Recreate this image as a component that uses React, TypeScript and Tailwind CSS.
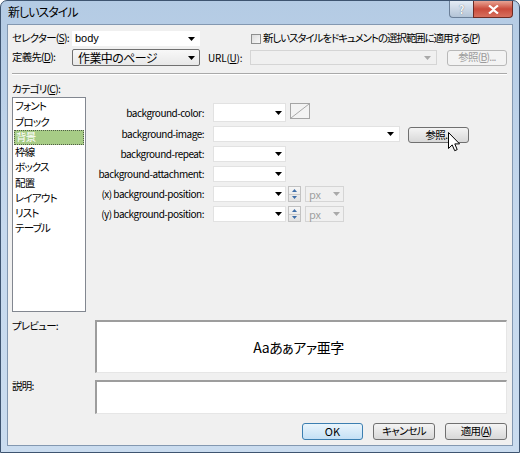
import React from "react";

const ui =
  "font-['Noto_Sans_CJK_JP','Liberation_Sans',sans-serif] [font-feature-settings:'palt']";
const jp = "text-[10.5px] tracking-[-0.8px]";

function Arrow({ disabled = false }: { disabled?: boolean }) {
  return (
    <svg width="7" height="4" viewBox="0 0 7 4" className="shrink-0">
      <path d="M0 0H7L3.5 4Z" fill={disabled ? "#a9a9a9" : "#000"} />
    </svg>
  );
}

function U({ children }: { children: React.ReactNode }) {
  return <span className="underline underline-offset-[1px]">{children}</span>;
}

function Combo({
  className = "",
  text,
  disabled = false,
}: {
  className?: string;
  text?: string;
  disabled?: boolean;
}) {
  return (
    <div
      className={`flex shrink-0 items-center justify-between border pl-[3px] pr-[3px] ${
        disabled
          ? "border-[#d5d5d5] bg-[#f0f0f0] text-[#a0a0a0]"
          : "border-[#e2e2e2] bg-white"
      } ${className}`}
    >
      <span className="leading-none">{text}</span>
      <Arrow disabled={disabled} />
    </div>
  );
}

function Btn({
  children,
  className = "",
  primary = false,
  disabled = false,
}: {
  children: React.ReactNode;
  className?: string;
  primary?: boolean;
  disabled?: boolean;
}) {
  let look = "border-[#707070] bg-gradient-to-b from-[#f4f4f4] to-[#d8d8d8]";
  if (primary) look = "border-[#3c7fb1] bg-gradient-to-b from-[#eaf5fc] to-[#c4e0f5]";
  if (disabled) look = "border-[#b8b8b8] bg-[#f3f3f3] text-[#9c9c9c]";
  return (
    <div
      className={`relative flex shrink-0 items-center justify-center rounded-[3px] border leading-none ${look} ${className}`}
    >
      {children}
    </div>
  );
}

function Spinner() {
  return (
    <div className="ml-[2px] flex h-[16px] w-[13px] shrink-0 flex-col border border-[#c2c2c2] bg-gradient-to-b from-[#f6f6f6] to-[#e2e2e2]">
      <div className="flex flex-1 items-center justify-center border-b border-[#c9c9c9]">
        <svg width="5" height="3" viewBox="0 0 5 3">
          <path d="M0 3H5L2.5 0Z" fill="#3f6ea8" />
        </svg>
      </div>
      <div className="flex flex-1 items-center justify-center">
        <svg width="5" height="3" viewBox="0 0 5 3">
          <path d="M0 0H5L2.5 3Z" fill="#3f6ea8" />
        </svg>
      </div>
    </div>
  );
}

function PropRow({
  label,
  children,
  className = "h-[16px] mt-[4px]",
}: {
  label: string;
  children: React.ReactNode;
  className?: string;
}) {
  return (
    <div className={`flex items-center ${className}`}>
      <div className="w-[119px] shrink-0 pr-[1px] text-right text-[10px] leading-none tracking-[-0.5px]">
        {label}
      </div>
      <div className="ml-[8px] flex h-full items-center">{children}</div>
    </div>
  );
}

const categories = [
  "フォント",
  "ブロック",
  "背景",
  "枠線",
  "ボックス",
  "配置",
  "レイアウト",
  "リスト",
  "テーブル",
];

export default function App() {
  return (
    <div
      className={`flex h-[453px] w-[520px] flex-col whitespace-nowrap rounded-t-[7px] border border-[#3e5470] bg-gradient-to-b from-[#b4cbe4] via-[#c6d9ee] to-[#cadcef] text-black ${ui}`}
    >
      {/* title bar */}
      <div className="flex h-[23px] shrink-0 items-start">
        <div className="pl-[7px] pt-[3px] text-[12px] leading-[16px] tracking-[-1px]">
          新しいスタイル
        </div>
        <div className="ml-auto mr-[6px] flex">
          <div className="flex h-[17px] w-[24px] items-center justify-center rounded-bl-[4px] border border-r-0 border-t-0 border-[#6b7f98] bg-gradient-to-b from-[#e4ecf5] to-[#b3c3d6] text-[11px] font-bold leading-none text-[#f8f8f8] [text-shadow:0_0_1px_#4a5a6e]">
            ?
          </div>
          <div className="flex h-[17px] w-[40px] items-center justify-center rounded-br-[4px] border border-t-0 border-[#6d2b24] bg-gradient-to-b from-[#e7a394] via-[#c94a3b] to-[#d7705e]">
            <svg width="11" height="9" viewBox="0 0 11 9">
              <path
                d="M1 0.5L5.5 4L10 0.5M1 8.5L5.5 5L10 8.5"
                stroke="#ffffff"
                strokeWidth="2.2"
                fill="none"
              />
            </svg>
          </div>
        </div>
      </div>

      {/* client area */}
      <div className={`mx-[6px] mb-[6px] flex flex-1 flex-col border border-[#8398b1] bg-[#f0f0f0] pl-[4px] pr-[5px] pt-[6px] ${jp}`}>
        {/* selector row */}
        <div className="flex h-[15px] items-center">
          <div className="w-[60px] shrink-0 leading-none">
            セレクター(<U>S</U>):
          </div>
          <div className="flex h-full w-[128px] shrink-0 items-center justify-between bg-white pl-[3px] pr-[5px] font-['Liberation_Sans',sans-serif] text-[11px] leading-none tracking-normal">
            <span>body</span>
            <Arrow />
          </div>
          <div className="ml-[51px] h-[10px] w-[10px] shrink-0 border border-[#8e8f8f] bg-gradient-to-br from-[#dcdcdc] to-[#f8f8f8]" />
          <div className="ml-[2px] leading-none tracking-[-1.1px]">
            新しいスタイルをドキュメントの選択範囲に適用する(<U>P</U>)
          </div>
        </div>

        {/* define row */}
        <div className="mt-[3px] flex h-[17px] items-center">
          <div className="w-[60px] shrink-0 leading-none">
            定義先(<U>D</U>):
          </div>
          <div className="flex h-full w-[128px] shrink-0 items-center justify-between rounded-[2px] border border-[#707070] bg-gradient-to-b from-[#f8f8f8] to-[#e8e8e8] pl-[5px] pr-[4px] text-[12px] leading-none tracking-[-0.6px]">
            <span>作業中のページ</span>
            <Arrow />
          </div>
          <div className="ml-[8px] w-[42px] shrink-0 text-[10px] leading-none tracking-[-0.2px]">
            URL(<U>U</U>):
          </div>
          <Combo disabled className="h-[15px] w-[187px] pr-[5px]" />
          <Btn disabled className="ml-[10px] h-[16px] w-[60px]">
            参照(<U>B</U>)...
          </Btn>
        </div>

        {/* separator */}
        <div className="mt-[7px] h-[2px] shrink-0 border-t border-b border-t-[#a9a9a9] border-b-white" />

        <div className="mt-[7px] h-[14px] leading-[14px]">
          カテゴリ(<U>C</U>):
        </div>

        {/* main */}
        <div className="mt-[1px] flex">
          <div className="h-[215px] w-[74px] shrink-0 border border-[#828790] bg-white pt-px">
            {categories.map((c) => (
              <div
                key={c}
                className={`flex h-[15.25px] items-center pl-[2px] leading-none ${
                  c === "背景"
                    ? "mx-px border border-dotted border-[#4f5b46] bg-[#a7cc86] pl-px text-white"
                    : ""
                }`}
              >
                {c}
              </div>
            ))}
          </div>

          <div className="flex flex-col pt-[6px]">
            <PropRow label="background-color:" className="h-[19px]">
              <Combo className="h-[19px] w-[73px]" />
              <div className="ml-[4px] h-[16px] w-[20px] self-start border border-[#a5a5a5] bg-[#f3f3f3]">
                <svg width="18" height="14" viewBox="0 0 18 14" className="block">
                  <path d="M0 14L18 0" stroke="#a8a8a8" strokeWidth="1" />
                </svg>
              </div>
            </PropRow>
            <PropRow label="background-image:">
              <Combo className="h-[16px] w-[187px] pr-[5px]" />
              <Btn className="ml-[8px] mt-[2px] h-[16px] w-[61px]">
                参照...
                <svg
                  width="13"
                  height="20"
                  viewBox="0 0 13 20"
                  className="absolute left-[39px] top-[4px]"
                >
                  <path
                    d="M0.5 0.5V16.5L4.2 12.9L6.7 18.7L9.2 17.6L6.8 11.9H11.6Z"
                    fill="#fff"
                    stroke="#000"
                    strokeWidth="1"
                    strokeLinejoin="round"
                  />
                </svg>
              </Btn>
            </PropRow>
            <PropRow label="background-repeat:">
              <Combo className="h-[16px] w-[73px]" />
            </PropRow>
            <PropRow label="background-attachment:">
              <Combo className="h-[16px] w-[73px]" />
            </PropRow>
            <PropRow label="(x) background-position:">
              <Combo className="h-[16px] w-[73px]" />
              <Spinner />
              <Combo disabled text="px" className="ml-[4px] h-[16px] w-[39px] text-[11px] tracking-normal" />
            </PropRow>
            <PropRow label="(y) background-position:">
              <Combo className="h-[16px] w-[73px]" />
              <Spinner />
              <Combo disabled text="px" className="ml-[4px] h-[16px] w-[39px] text-[11px] tracking-normal" />
            </PropRow>
          </div>
        </div>

        {/* preview */}
        <div className="mt-[8px] flex">
          <div className="w-[83px] shrink-0 pt-[1px] leading-none">プレビュー:</div>
          <div className="flex h-[53px] flex-1 items-center justify-center border-b border-l-2 border-r border-t-2 border-b-[#e6e6e6] border-l-[#9d9d9d] border-r-[#e6e6e6] border-t-[#9d9d9d] bg-white pr-[6px] text-[14px] tracking-[-0.5px]">
            Aaあぁアァ亜字
          </div>
        </div>

        <div className="mt-[7px] flex">
          <div className="w-[83px] shrink-0 pt-[1px] leading-none">説明:</div>
          <div className="h-[34px] flex-1 border-b border-l-2 border-r border-t-2 border-b-[#e6e6e6] border-l-[#9d9d9d] border-r-[#e6e6e6] border-t-[#9d9d9d] bg-white" />
        </div>

        {/* buttons */}
        <div className="mt-[9px] flex justify-end gap-[10px]">
          <Btn primary className="h-[17px] w-[61px] text-[11px] tracking-normal">
            OK
          </Btn>
          <Btn className="h-[17px] w-[62px]">キャンセル</Btn>
          <Btn className="h-[17px] w-[62px]">
            適用(<U>A</U>)
          </Btn>
        </div>
      </div>
    </div>
  );
}
